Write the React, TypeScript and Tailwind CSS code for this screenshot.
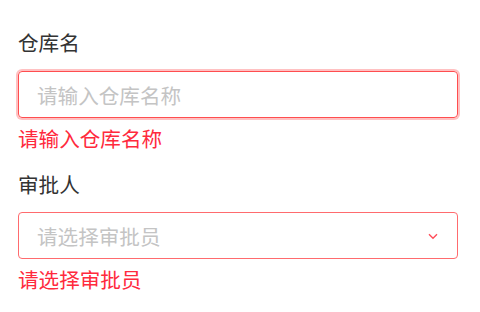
export default function App() {
  return (
    <div
      className="w-[480px] h-[312px] bg-white pt-[28px] px-[18px]"
      style={{ fontFamily: '"Noto Sans CJK SC", "Noto Sans", sans-serif' }}
    >
      <div className="w-[440px]">
        <div className="text-[20.6px] leading-[28px] text-[#333333]">仓库名</div>
        <div className="mt-[15px] h-[47px] rounded-[4px] border border-[#ff4d4f] shadow-[0_0_0_2px_rgba(255,77,79,0.35)] flex items-center pl-[18px]">
          <span className="text-[20.6px] leading-[28px] text-[#c4c4c4]">请输入仓库名称</span>
        </div>
        <div className="mt-[6px] text-[20.6px] leading-[28px] text-[#ff2a3d]">请输入仓库名称</div>

        <div className="mt-[18px] text-[20.6px] leading-[28px] text-[#333333]">审批人</div>
        <div className="mt-[14px] h-[47px] rounded-[4px] border border-[#ff6b6e] flex items-center justify-between pl-[18px] pr-[19px]">
          <span className="text-[20.6px] leading-[28px] text-[#c4c4c4]">请选择审批员</span>
          <svg width="10" height="7" viewBox="0 0 10 7" className="mt-[2px]">
            <path d="M1 1.2 L5 5.2 L9 1.2" fill="none" stroke="#ff4d5a" strokeWidth="1.4" />
          </svg>
        </div>
        <div className="mt-[6px] text-[20.6px] leading-[28px] text-[#ff2a3d]">请选择审批员</div>
      </div>
    </div>
  );
}
